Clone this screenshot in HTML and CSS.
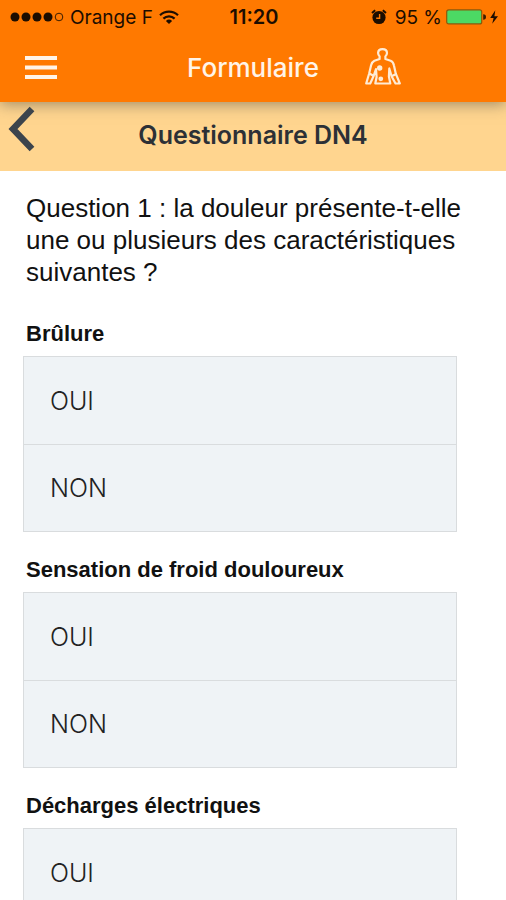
FILE: index.html
```html
<!DOCTYPE html>
<html lang="fr">
<head>
<meta charset="utf-8">
<meta name="viewport" content="width=device-width, initial-scale=1">
<title>Formulaire</title>
<link rel="stylesheet" href="styles.css">
</head>
<body>
<header class="app-header">
  <div class="status">
    <div class="status-left">
      <svg class="signal" width="54" height="12" viewBox="0 0 54 12" aria-hidden="true">
        <circle cx="5" cy="6" r="4.5"/><circle cx="16" cy="6" r="4.5"/><circle cx="27" cy="6" r="4.5"/><circle cx="38" cy="6" r="4.5"/>
        <circle cx="49" cy="6" r="3.8" fill="none" stroke="#3a1d00"/>
      </svg>
      <span>Orange F</span>
      <svg width="20" height="14" viewBox="0 0 20 14" fill="none" stroke="#1c0d00" stroke-width="2.2" aria-hidden="true">
        <path d="M1 5.2a13 13 0 0 1 18 0M4.400 8.600a8 8 0 0 1 11.200 0"/>
        <path d="M10 14 6.900 10.900a4.500 4.500 0 0 1 6.200 0z" fill="#1c0d00" stroke="none"/>
      </svg>
    </div>
    <span class="clock">11:20</span>
    <div class="status-right">
      <svg width="16" height="16" viewBox="0 0 16 16" aria-hidden="true">
        <circle cx="8" cy="8.500" r="6.600" fill="#1c0d00"/>
        <path d="M1 4 4.200 1.200M15 4 11.800 1.200" stroke="#1c0d00" stroke-width="2"/>
        <path d="M8.600 5v4.200H5.200" fill="none" stroke="#ff7900" stroke-width="1.400"/>
      </svg>
      <span class="percent">95 %</span>
      <svg width="52" height="16" viewBox="0 0 52 16" aria-hidden="true">
        <rect x=".7" y=".9" width="35" height="14" rx="2" fill="#4cd964" stroke="#8a5a0c" stroke-width="1.200"/>
        <path d="M37.200 5.200a2.800 2.800 0 0 1 0 5.600z" fill="#3a1d00"/>
        <path d="M49.300 1.300 44.200 9h3.400l-1.400 5.800L52 7.200h-3.600z" fill="#1c0d00"/>
      </svg>
    </div>
  </div>
  <div class="nav">
    <button class="menu" type="button" aria-label="Menu">
      <svg width="34" height="26" viewBox="0 0 34 26" stroke="#fff4e8" stroke-width="4" aria-hidden="true"><path d="M1 3h32M1 12.500h32M1 22h32"/></svg>
    </button>
    <h1>Formulaire</h1>
    <button class="body-map" type="button" aria-label="Schéma corporel">
      <svg width="36" height="38" viewBox="0 0 36 38" fill="none" stroke="#ffebd4" stroke-width="2.200" stroke-linejoin="round" stroke-linecap="round" aria-hidden="true">
        <path d="M14.600 11V8.300c-1.200-1-1.500-2.200-1.500-3.200 0-2.500 1.900-4 4.400-4S22 2.600 22 5.100c0 1.200-.4 2.300-1.600 3.200V11l5.200 1.800c2 .8 2.900 2.400 3.300 4.400l1.900 8.500L34.800 35.500h-4.300l-3.900-7.200-2.300-7.800-.4 8 1.400 7H10.300l1.300-6.500-.6-8L8.400 28.500 5.200 35.500H1.200l2.900-9.800 2-8.500c.5-2 1.500-3.500 3.300-4.400z"/>
        <path d="m4.800 25.700 3.600 2M27 28l3.800-1.800"/>
        <circle cx="14.700" cy="20" r="1.600" fill="#ffebd4"/><circle cx="15.800" cy="30.800" r="1.300" fill="#ffebd4"/>
      </svg>
    </button>
  </div>
</header>
<div class="subheader">
  <button class="back" type="button" aria-label="Retour">
    <svg width="28" height="46" viewBox="0 0 28 46" fill="none" stroke="#3c444c" stroke-width="6.500" aria-hidden="true"><path d="M24 3 5 23l19 20"/></svg>
  </button>
  <h2>Questionnaire DN4</h2>
</div>
<main>
  <p class="question">Question 1 : la douleur présente-t-elle une ou plusieurs des caractéristiques suivantes ?</p>
  <fieldset>
    <legend>Brûlure</legend>
    <div class="options">
      <label><input type="radio" name="brulure" value="oui">OUI</label>
      <label><input type="radio" name="brulure" value="non">NON</label>
    </div>
  </fieldset>
  <fieldset>
    <legend>Sensation de froid douloureux</legend>
    <div class="options">
      <label><input type="radio" name="froid" value="oui">OUI</label>
      <label><input type="radio" name="froid" value="non">NON</label>
    </div>
  </fieldset>
  <fieldset>
    <legend>Décharges électriques</legend>
    <div class="options">
      <label><input type="radio" name="decharges" value="oui">OUI</label>
      <label><input type="radio" name="decharges" value="non">NON</label>
    </div>
  </fieldset>
</main>
</body>
</html>
```
FILE: styles.css
```css
* { box-sizing: border-box; }
body {
  display: flex;
  flex-direction: column;
  height: 100vh;
  margin: 0;
  background: #fff;
  color: #111;
  font-family: "Liberation Sans", Arial, sans-serif;
}
h1, h2, p { margin: 0; }
button {
  display: flex;
  padding: 0;
  border: 0;
  background: none;
  cursor: pointer;
}
.app-header {
  position: relative;
  z-index: 1;
  flex: none;
  background: #ff7900;
  box-shadow: 0 2px 14px rgba(60, 60, 60, .5);
}
.status {
  display: grid;
  grid-template-columns: 1fr auto 1fr;
  align-items: center;
  height: 34px;
  padding: 0 8px 0 10px;
  color: #1c0d00;
  font-family: Inter, sans-serif;
  font-size: 19px;
}
.status-left, .status-right {
  display: flex;
  align-items: center;
  gap: 6px;
}
.status-right {
  justify-content: flex-end;
  gap: 4px;
}
.signal { fill: #1c0d00; }
.clock {
  font-size: 20px;
  font-weight: 600;
}
.percent { margin-left: 4px; }
.nav {
  display: grid;
  grid-template-columns: 1fr auto 1fr;
  align-items: center;
  height: 68px;
  padding: 0 24px;
}
h1 {
  color: #fff4e8;
  font-family: Inter, sans-serif;
  font-size: 26px;
  font-weight: 500;
  line-height: 36px;
}
.body-map { margin: 0 0 2px 46px; }
.subheader {
  display: grid;
  flex: none;
  grid-template-columns: 1fr auto 1fr;
  align-items: center;
  height: 69px;
  padding: 0 8px;
  background: #ffd58f;
}
.back {
  position: relative;
  z-index: 2;
  align-self: start;
  margin-top: 4px;
}
h2 {
  padding-bottom: 4px;
  color: #2c3036;
  font-family: Inter, sans-serif;
  font-size: 25px;
  font-weight: 600;
  line-height: 32px;
}
main {
  flex: 1;
  min-height: 0;
  overflow-y: auto;
  scrollbar-width: none;
  padding: 21px 49px 24px 23px;
}
.question {
  margin: 0 -12px 32px 3px;
  font-size: 26px;
  line-height: 32px;
}
fieldset {
  min-width: 0;
  margin: 0 0 24px;
  padding: 0;
  border: 0;
}
legend {
  padding: 0 3px;
  font-size: 22px;
  font-weight: 700;
  line-height: 28px;
}
.options {
  margin-top: 8px;
  border: 1px solid #d9dcde;
  background: #eff3f6;
}
label {
  display: flex;
  align-items: center;
  height: 87px;
  padding: 0 26px;
  color: #222;
  font-family: Inter, sans-serif;
  font-size: 25px;
  font-weight: 300;
  cursor: pointer;
}
label + label { border-top: 1px solid #d9dcde; }
input {
  width: 0;
  margin: 0;
  appearance: none;
}
label:has(input:checked) { background: #ffd58f; }
```
